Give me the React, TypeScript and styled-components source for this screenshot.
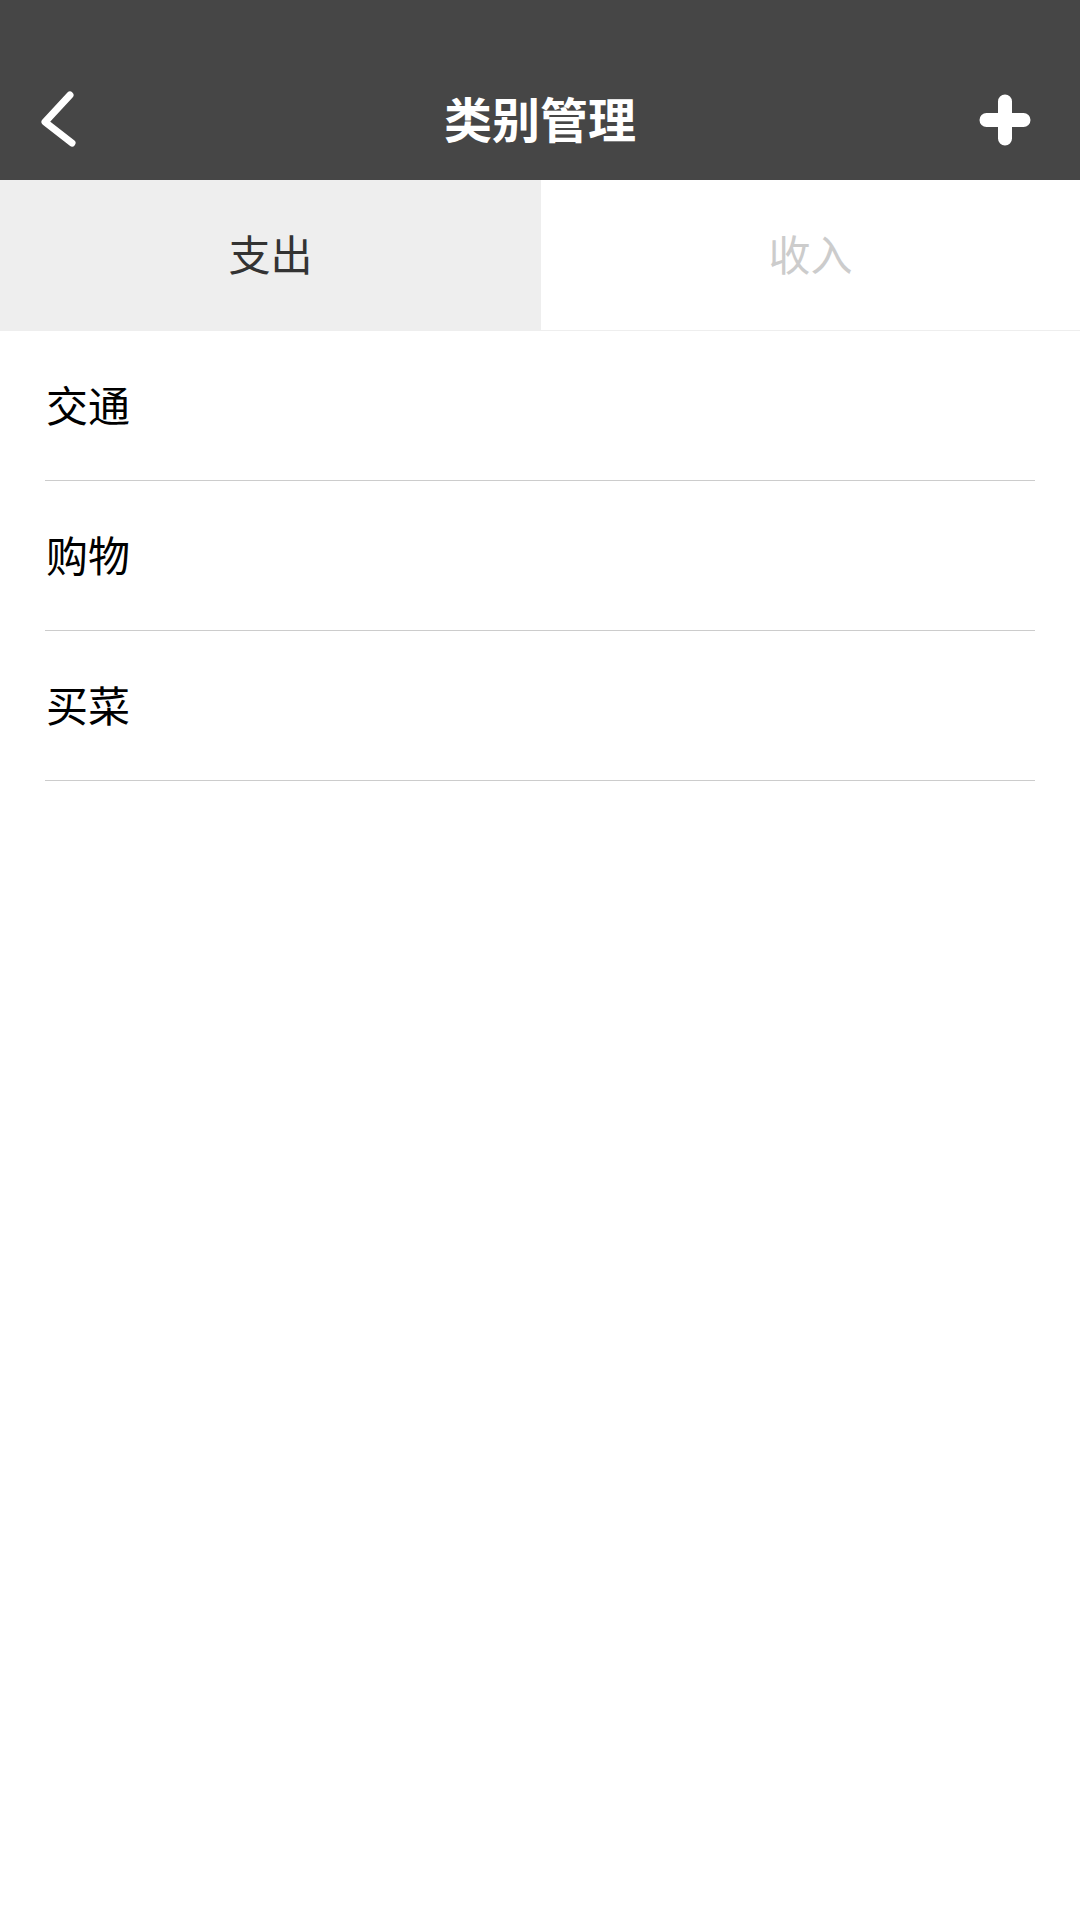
import { useState } from "react";
import styled, { createGlobalStyle } from "styled-components";

const GlobalStyle = createGlobalStyle`
  html, body {
    margin: 0;
    padding: 0;
    background: #ffffff;
    font-family: "Noto Sans CJK SC", "Noto Sans", sans-serif;
  }
`;

const Page = styled.div`
  width: 1080px;
  min-height: 1920px;
  display: flex;
  flex-direction: column;
  background: #ffffff;
`;

const Header = styled.div`
  height: 180px;
  padding-top: 60px;
  box-sizing: border-box;
  background: #464646;
  display: grid;
  grid-template-columns: 180px 1fr 180px;
  align-items: center;
`;

const IconButton = styled.button<{ $align: "start" | "end" }>`
  height: 120px;
  display: flex;
  align-items: center;
  justify-content: ${({ $align }) => ($align === "start" ? "flex-start" : "flex-end")};
  padding: ${({ $align }) => ($align === "start" ? "0 0 0 36px" : "0 49px 0 0")};
  background: none;
  border: none;
  cursor: pointer;
`;

const Title = styled.h1`
  margin: 0;
  padding-bottom: 6px;
  text-align: center;
  color: #ffffff;
  font-size: 48px;
  font-weight: 700;
  line-height: 114px;
`;

const Tabs = styled.div`
  display: grid;
  grid-template-columns: 541px 1fr;
`;

const Tab = styled.div<{ $active: boolean }>`
  height: 151px;
  box-sizing: border-box;
  display: flex;
  align-items: center;
  justify-content: center;
  padding-bottom: 6px;
  font-size: 42px;
  background: ${({ $active }) => ($active ? "#eeeeee" : "#ffffff")};
  color: ${({ $active }) => ($active ? "#333333" : "#cccccc")};
  border-bottom: 1px solid #eeeeee;
  cursor: pointer;
`;

const List = styled.div`
  display: flex;
  flex-direction: column;
  padding: 0 45px;
`;

const Row = styled.div`
  height: 150px;
  box-sizing: border-box;
  display: flex;
  align-items: center;
  padding: 0 0 5px 1px;
  border-bottom: 1px solid #cccccc;
  font-size: 42px;
  color: #000000;
`;

const BackIcon = () => (
  <svg width="46" height="64" viewBox="0 0 46 64">
    <polyline
      points="34,7 9,34 36,55"
      fill="none"
      stroke="#ffffff"
      strokeWidth="7"
      strokeLinecap="round"
      strokeLinejoin="round"
    />
  </svg>
);

const PlusIcon = () => (
  <svg width="52" height="52" viewBox="0 0 52 52">
    <path d="M26 7.5 V44.5 M7.5 26 H44.5" stroke="#ffffff" strokeWidth="14" strokeLinecap="round" />
  </svg>
);

const categories = {
  expense: ["交通", "购物", "买菜"],
  income: [] as string[],
};

const App = () => {
  const [tab, setTab] = useState<"expense" | "income">("expense");

  return (
    <Page>
      <GlobalStyle />
      <Header>
        <IconButton $align="start">
          <BackIcon />
        </IconButton>
        <Title>类别管理</Title>
        <IconButton $align="end">
          <PlusIcon />
        </IconButton>
      </Header>
      <Tabs>
        <Tab $active={tab === "expense"} onClick={() => setTab("expense")}>
          支出
        </Tab>
        <Tab $active={tab === "income"} onClick={() => setTab("income")}>
          收入
        </Tab>
      </Tabs>
      <List>
        {categories[tab].map((name) => (
          <Row key={name}>{name}</Row>
        ))}
      </List>
    </Page>
  );
};

export default App;
